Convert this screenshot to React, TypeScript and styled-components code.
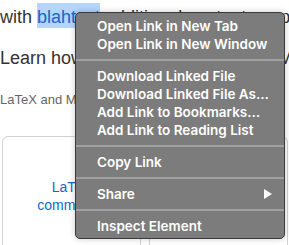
import { Fragment } from 'react';
import styled, { createGlobalStyle } from 'styled-components';

const GlobalStyle = createGlobalStyle`
  html, body {
    margin: 0;
    padding: 0;
    background: #fff;
    overflow: hidden;
  }
`;

const Page = styled.div`
  position: relative;
  width: 289px;
  height: 245px;
  overflow: hidden;
  font-family: 'Liberation Sans', Arial, sans-serif;
  color: #333;
`;

const Line = styled.p`
  margin: 3px 0 0;
  font-size: 18px;
  line-height: 26px;
  white-space: nowrap;
`;

const Selected = styled.a`
  display: inline-block;
  line-height: 21px;
  padding-top: 4px;
  color: #1268c9;
  background: #b5d5fd;
  text-decoration: none;
`;

const Heading = styled(Line)`
  margin-top: 15px;
`;

const Note = styled.p`
  margin: 21px 0 0;
  font-size: 13px;
  line-height: 16px;
  color: #666;
  white-space: nowrap;
`;

const Cards = styled.div`
  display: grid;
  grid-template-columns: 139px 139px;
  gap: 8px;
  margin: 28px 0 0 2px;
`;

const Card = styled.div`
  height: 140px;
  border: 1px solid #d2d2d2;
  border-radius: 6px;
  display: flex;
  flex-direction: column;
  align-items: center;
  padding-top: 41px;
  box-sizing: border-box;
  font-size: 14px;
  line-height: 18px;
  color: #1268c9;
`;

const Menu = styled.ul`
  position: absolute;
  left: 75px;
  top: 12px;
  width: 210px;
  box-sizing: border-box;
  margin: 0;
  padding: 4px 0 3px;
  list-style: none;
  background: #7c7c7c;
  border: 1px solid #3a3a3a;
  border-radius: 5px;
  box-shadow: 0 0 6px rgba(0, 0, 0, 0.22);
  font-family: Inter, 'Liberation Sans', sans-serif;
  font-size: 13.5px;
  font-weight: 600;
  color: #fff;
`;

const Item = styled.li`
  height: 18px;
  display: flex;
  align-items: center;
  justify-content: space-between;
  padding: 0 12px 0 21px;
  white-space: nowrap;
`;

const Separator = styled.li`
  height: 14px;
  display: flex;
  align-items: center;

  &::after {
    content: '';
    flex: 1;
    height: 2px;
    background: #a0a0a0;
  }
`;

const Arrow = () => (
  <svg width="8" height="10" viewBox="0 0 8 10">
    <path d="M0 0 L8 5 L0 10 Z" fill="#fff" />
  </svg>
);

const groups: string[][] = [
  ['Open Link in New Tab', 'Open Link in New Window'],
  ['Download Linked File', 'Download Linked File As…', 'Add Link to Bookmarks…', 'Add Link to Reading List'],
  ['Copy Link'],
  ['Share'],
  ['Inspect Element'],
];

export default function App() {
  return (
    <>
      <GlobalStyle />
      <Page>
        <Line>
          with <Selected href="#">blahtext</Selected> additional content supported in TeX
        </Line>
        <Heading>Learn how to write mathematics in Markdown</Heading>
        <Note>LaTeX and MathJax are supported in every note</Note>
        <Cards>
          <Card>
            <span>LaTeX</span>
            <span>commands</span>
          </Card>
          <Card>
            <span>Markdown</span>
            <span>syntax</span>
          </Card>
        </Cards>

        <Menu>
          {groups.map((group, gi) => (
            <Fragment key={gi}>
              {gi > 0 && <Separator />}
              {group.map((label) => (
                <Item key={label}>
                  <span>{label}</span>
                  {label === 'Share' && <Arrow />}
                </Item>
              ))}
            </Fragment>
          ))}
        </Menu>
      </Page>
    </>
  );
}
